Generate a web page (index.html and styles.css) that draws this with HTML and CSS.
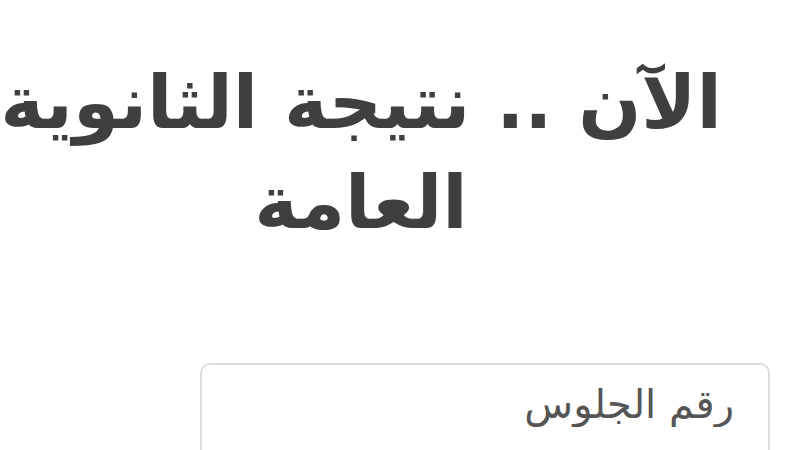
FILE: index.html
```html
<!DOCTYPE html>
<html lang="ar" dir="rtl">

<head>
    <meta charset="UTF-8">
    <meta name="viewport" content="width=device-width, initial-scale=1.0">
    <title>نتيجة الثانوية العامة</title>
    <link rel="stylesheet" href="styles.css">
</head>

<body>
    <main class="result-page">
        <h1 class="result-title">الآن .. نتيجة الثانوية العامة</h1>

        <form class="search-form">
            <input class="seat-input" type="text" name="seat_number" placeholder="رقم الجلوس">
        </form>
    </main>
</body>

</html>
```

FILE: styles.css
```css
body, h1, form {
    margin: 0;
    padding: 0;
}

body {
    font-family: 'DejaVu Sans', sans-serif;
    background-color: #fff;
    color: #444;
    overflow: hidden;
}

.result-page {
    width: 800px;
    height: 450px;
    padding-top: 52px;
    box-sizing: border-box;
    overflow: hidden;
}

/* title block sits a bit left of the form */
.result-title {
    width: 722px;
    margin-right: 78px;
    text-align: center;
    font-size: 74px;
    font-weight: bold;
    line-height: 100px;
    color: #3f3f3f;
}

.search-form {
    margin-top: 111px;
    padding-right: 30px;
    padding-left: 200px;
}

.seat-input {
    display: block;
    width: 100%;
    height: 120px;
    box-sizing: border-box;
    padding: 0 34px 38px 20px;
    font-family: 'DejaVu Sans', sans-serif;
    font-size: 40px;
    color: #444;
    border: 2px solid #ddd;
    border-radius: 10px;
    outline: none;
}

.seat-input::placeholder {
    color: #555;
}
```
